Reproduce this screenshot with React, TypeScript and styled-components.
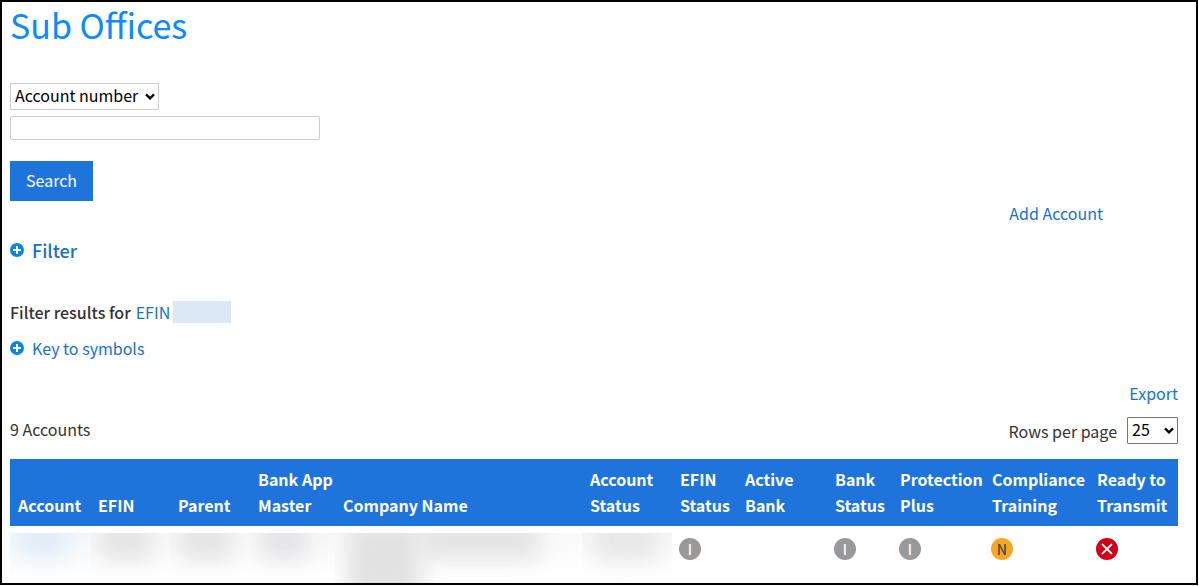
import React, { useId } from "react";
import styled, { createGlobalStyle } from "styled-components";

const GlobalStyle = createGlobalStyle`
  *, *::before, *::after { box-sizing: border-box; }
  body {
    margin: 0;
    background: #fff;
    color: #333;
    font-family: "Noto Sans CJK SC", "Open Sans", sans-serif;
    font-size: 16px;
    line-height: 26px;
  }
`;

const Page = styled.main`
  border: 2px solid #000;
  margin-right: 1px;
  padding: 0 18px 0 8px;
  overflow: hidden;
`;

const Title = styled.h1`
  margin: 0;
  color: #0a8cff;
  font-size: 34px;
  font-weight: 400;
  line-height: 46px;
`;

const SearchForm = styled.form`
  display: flex;
  flex-direction: column;
  align-items: flex-start;
  margin-top: 35px;
`;

const SelectBox = styled.span<{ $width: number }>`
  position: relative;
  display: inline-flex;
  width: ${(p) => p.$width}px;
`;

const Select = styled.select<{ $border: string; $radius?: number }>`
  appearance: none;
  width: 100%;
  height: 27px;
  margin: 0;
  padding: 0 16px 2px 4px;
  border: 1px solid ${(p) => p.$border};
  border-radius: ${(p) => p.$radius ?? 0}px;
  background: #fff;
  color: #000;
  font: inherit;
  line-height: 23px;
`;

const Chevron = styled.svg`
  position: absolute;
  top: 9px;
  right: 4px;
  pointer-events: none;
`;

const TextInput = styled.input`
  width: 310px;
  height: 24px;
  margin-top: 6px;
  padding: 0 4px;
  border: 1px solid #ccc;
  border-radius: 2px;
  font: inherit;
`;

const SearchButton = styled.button`
  height: 40px;
  margin-top: 21px;
  padding: 0 16px 2px;
  border: 0;
  background: #1f74db;
  color: #fff;
  font: inherit;
`;

const Link = styled.a`
  color: #1872c4;
  text-decoration: none;
`;

const AddRow = styled.div`
  display: flex;
  justify-content: flex-end;
  padding-right: 75px;
  line-height: 24px;
`;

const Toggle = styled.button<{ $strong?: boolean }>`
  display: flex;
  align-items: center;
  gap: 8px;
  padding: 0;
  border: 0;
  background: none;
  color: #1872c4;
  font: inherit;
  font-size: ${(p) => (p.$strong ? 18 : 16)}px;
  font-weight: ${(p) => (p.$strong ? 500 : 400)};
  line-height: 26px;
`;

const FilterBlock = styled.section`
  margin-top: 12px;
`;

const FilterResults = styled.p`
  display: flex;
  align-items: center;
  gap: 5px;
  margin: 36px 0 10px;
`;

const Strong = styled.strong`
  font-weight: 500;
`;

const HiddenValue = styled.span`
  width: 58px;
  height: 22px;
  margin-left: -2px;
  background: #dce8f5;
`;

const ExportRow = styled.div`
  display: flex;
  justify-content: flex-end;
  margin-top: 19px;
`;

const Summary = styled.div`
  display: flex;
  align-items: flex-start;
  justify-content: space-between;
  margin-top: 11px;
  line-height: 24px;
`;

const RowsPerPage = styled.label`
  display: flex;
  align-items: center;
  gap: 10px;
`;

const Table = styled.table`
  width: 100%;
  margin-top: 15px;
  border-collapse: collapse;
  table-layout: fixed;
`;

const HeadCell = styled.th<{ $width?: number }>`
  width: ${(p) => (p.$width ? `${p.$width}px` : "auto")};
  padding: 7px 0 8px 8px;
  background: #1f74db;
  color: #fff;
  font-weight: 700;
  text-align: left;
  vertical-align: bottom;
  white-space: pre-line;
`;

const Cell = styled.td`
  height: 57px;
  padding: 7px 0 0;
  vertical-align: top;
`;

const Redaction = styled.div<{ $tint: string }>`
  height: 50px;
  overflow: hidden;
  background: linear-gradient(${(p) => p.$tint}, #fff 90%);
`;

const Smudge = styled.div<{ $color: string; $left: number; $width: number; $height: number }>`
  width: ${(p) => p.$width}px;
  height: ${(p) => p.$height}px;
  margin: -12px 0 0 ${(p) => p.$left}px;
  background: ${(p) => p.$color};
  filter: blur(11px);
`;

const SmudgeRow = styled.div`
  display: flex;
`;

const Badge = styled.span<{ $bg: string; $fg: string }>`
  display: flex;
  align-items: center;
  justify-content: center;
  width: 22px;
  height: 22px;
  margin: 5px 0 0 7px;
  border-radius: 50%;
  background: ${(p) => p.$bg};
  color: ${(p) => p.$fg};
  font-size: 14px;
  font-weight: 500;
  line-height: 22px;
`;

function PlusIcon() {
  return (
    <svg width="14" height="14" viewBox="0 0 14 14" aria-hidden="true">
      <circle cx="7" cy="7" r="7" fill="#0a84e4" />
      <path d="M7 3v8M3 7h8" stroke="#fff" strokeWidth="2" />
    </svg>
  );
}

function SelectArrow() {
  return (
    <Chevron width="10" height="9" viewBox="0 0 10 9" aria-hidden="true">
      <path d="M1 2.4 5 6.4 9 2.4" fill="none" stroke="#000" strokeWidth="2.2" />
    </Chevron>
  );
}

type Column = { title: string; width?: number };

const columns: Column[] = [
  { title: "Account", width: 80 },
  { title: "EFIN", width: 80 },
  { title: "Parent", width: 80 },
  { title: "Bank App\nMaster", width: 85 },
  { title: "Company Name" },
  { title: "Account\nStatus", width: 90 },
  { title: "EFIN\nStatus", width: 65 },
  { title: "Active\nBank", width: 90 },
  { title: "Bank\nStatus", width: 65 },
  { title: "Protection\nPlus", width: 92 },
  { title: "Compliance\nTraining", width: 105 },
  { title: "Ready to\nTransmit", width: 89 },
];

type Smear = { color: string; left: number; width: number; height: number };
type Entry =
  | { kind: "hidden"; tint: string; smears: Smear[] }
  | { kind: "badge"; status: "I" | "N" | "X" }
  | { kind: "empty" };

const account: Entry[] = [
  { kind: "hidden", tint: "#f3f8fc", smears: [{ color: "#e0ebf7", left: 10, width: 46, height: 36 }] },
  { kind: "hidden", tint: "#f7f7f7", smears: [{ color: "#e3e3e3", left: 10, width: 50, height: 38 }] },
  { kind: "hidden", tint: "#f7f7f7", smears: [{ color: "#e3e3e3", left: 10, width: 50, height: 38 }] },
  { kind: "hidden", tint: "#f7f7f7", smears: [{ color: "#e3e3e6", left: 12, width: 44, height: 38 }] },
  {
    kind: "hidden",
    tint: "#fafafa",
    smears: [
      { color: "#e2e2e2", left: 12, width: 74, height: 76 },
      { color: "#e3e3e3", left: 0, width: 118, height: 38 },
    ],
  },
  { kind: "hidden", tint: "#f7f7f7", smears: [{ color: "#e6e6e6", left: 14, width: 60, height: 38 }] },
  { kind: "badge", status: "I" },
  { kind: "empty" },
  { kind: "badge", status: "I" },
  { kind: "badge", status: "I" },
  { kind: "badge", status: "N" },
  { kind: "badge", status: "X" },
];

function StatusBadge({ status }: { status: "I" | "N" | "X" }) {
  if (status === "X") {
    return (
      <Badge $bg="#d0021b" $fg="#fff" role="img" aria-label="Not ready">
        <svg width="22" height="22" viewBox="0 0 22 22" aria-hidden="true">
          <path d="M6.6 6.6l8.8 8.8M15.4 6.6l-8.8 8.8" stroke="#fff" strokeWidth="2" strokeLinecap="round" />
        </svg>
      </Badge>
    );
  }
  return status === "N" ? (
    <Badge $bg="#f5a623" $fg="#4a4a4a">N</Badge>
  ) : (
    <Badge $bg="#999" $fg="#fff">I</Badge>
  );
}

function EntryContent({ entry }: { entry: Entry }) {
  if (entry.kind === "badge") return <StatusBadge status={entry.status} />;
  if (entry.kind === "empty") return null;
  return (
    <Redaction $tint={entry.tint}>
      <SmudgeRow>
        {entry.smears.map((s, i) => (
          <Smudge key={i} $color={s.color} $left={s.left} $width={s.width} $height={s.height} />
        ))}
      </SmudgeRow>
    </Redaction>
  );
}

export default function App() {
  const rowsId = useId();
  return (
    <>
      <GlobalStyle />
      <Page>
        <Title>Sub Offices</Title>
        <SearchForm onSubmit={(e) => e.preventDefault()}>
          <SelectBox $width={149}>
            <Select $border="#ccc" aria-label="Search by">
              <option>Account number</option>
            </Select>
            <SelectArrow />
          </SelectBox>
          <TextInput type="text" aria-label="Search value" />
          <SearchButton type="submit">Search</SearchButton>
        </SearchForm>
        <AddRow>
          <Link href="#add">Add Account</Link>
        </AddRow>
        <FilterBlock>
          <Toggle type="button" $strong>
            <PlusIcon />
            Filter
          </Toggle>
          <FilterResults>
            <Strong>Filter results for</Strong>
            <Link href="#efin">EFIN</Link>
            <HiddenValue />
          </FilterResults>
          <Toggle type="button">
            <PlusIcon />
            Key to symbols
          </Toggle>
        </FilterBlock>
        <ExportRow>
          <Link href="#export">Export</Link>
        </ExportRow>
        <Summary>
          <span>9 Accounts</span>
          <RowsPerPage htmlFor={rowsId}>
            Rows per page
            <SelectBox $width={51}>
              <Select id={rowsId} $border="#767676" $radius={1}>
                <option>25</option>
              </Select>
              <SelectArrow />
            </SelectBox>
          </RowsPerPage>
        </Summary>
        <Table>
          <thead>
            <tr>
              {columns.map((c) => (
                <HeadCell key={c.title} scope="col" $width={c.width}>
                  {c.title}
                </HeadCell>
              ))}
            </tr>
          </thead>
          <tbody>
            <tr>
              {account.map((entry, i) => (
                <Cell key={i}>
                  <EntryContent entry={entry} />
                </Cell>
              ))}
            </tr>
          </tbody>
        </Table>
      </Page>
    </>
  );
}
